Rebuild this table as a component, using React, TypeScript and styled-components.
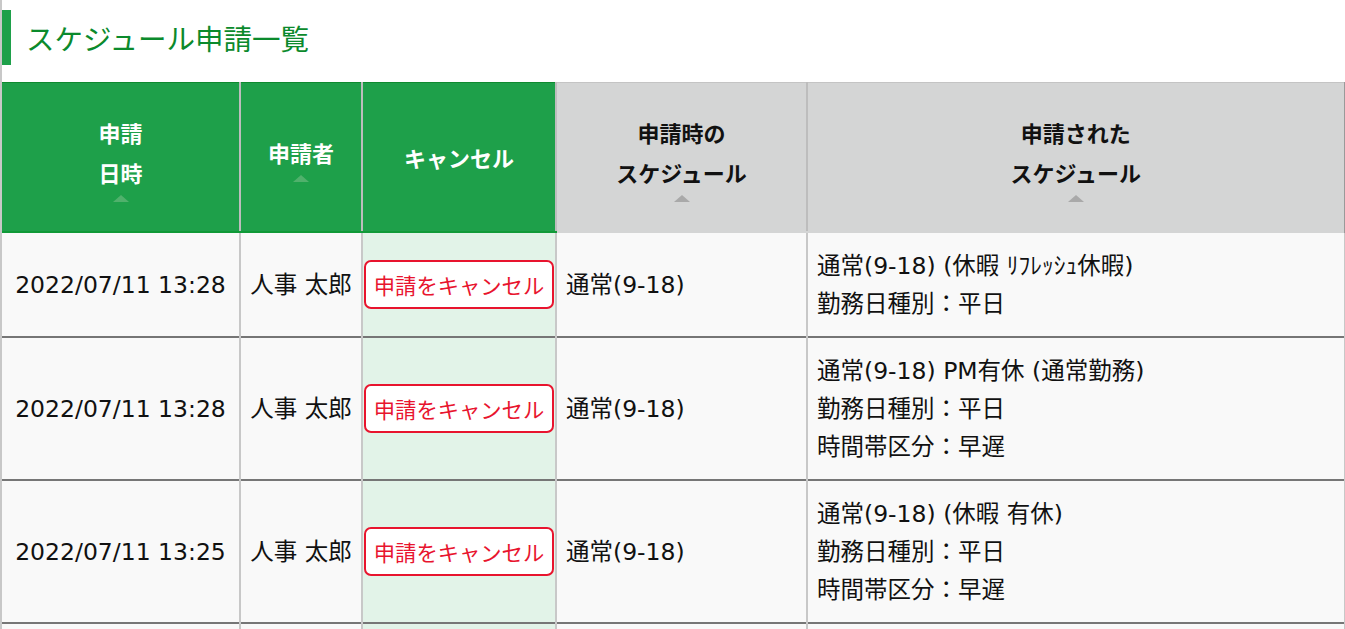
import React from "react";
import styled, { createGlobalStyle } from "styled-components";

const GlobalStyle = createGlobalStyle`
  html, body {
    margin: 0;
    padding: 0;
    background: #ffffff;
  }
  body {
    font-family: "DejaVu Sans", "Noto Sans CJK JP", sans-serif;
    color: #111;
  }
`;

const Page = styled.div`
  border-left: 2px solid #c8c8c8;
  height: 629px;
  box-sizing: border-box;
  overflow: hidden;
`;

const Title = styled.h1`
  margin: 10px 0 0;
  height: 55px;
  display: flex;
  align-items: center;
  border-left: 9px solid #1ea04a;
  padding-left: 15px;
  font-family: "Noto Sans CJK JP", sans-serif;
  font-size: 28.5px;
  font-weight: 400;
  color: #0b8a2c;
`;

const Table = styled.table`
  margin-top: 17px;
  width: 1343px;
  border-collapse: collapse;
  table-layout: fixed;
`;

const HeadCell = styled.th<{ $gray?: boolean; $w: number }>`
  width: ${(p) => p.$w}px;
  height: 149px;
  box-sizing: border-box;
  padding: 0 6px;
  background: ${(p) => (p.$gray ? "#d4d5d5" : "#1ea04a")};
  color: ${(p) => (p.$gray ? "#111" : "#fff")};
  border-top: 1px solid ${(p) => (p.$gray ? "#c4c4c4" : "#0f8a30")};
  border-bottom: 2px solid ${(p) => (p.$gray ? "#d4d5d5" : "#109a38")};
  border-left: 2px solid #bdbdbd;
  border-right: 2px solid #bdbdbd;
  font-family: "Noto Sans CJK JP", sans-serif;
  font-size: 22px;
  font-weight: 700;
  line-height: 40px;
  text-align: center;
  vertical-align: middle;
  &:first-child {
    border-left: none;
  }
  &:last-child {
    border-right: 3px solid #9a9a9a;
  }
`;

const SortArrow = styled.span<{ $gray?: boolean }>`
  display: block;
  width: 0;
  height: 0;
  margin: 3px auto 0;
  border-left: 8px solid transparent;
  border-right: 8px solid transparent;
  border-bottom: 7px solid ${(p) => (p.$gray ? "#a9a9a9" : "#50b16c")};
`;

const Row = styled.tr<{ $filler?: boolean }>`
  border-bottom: 2px solid #767676;
  height: ${(p) => (p.$filler ? "40px" : "auto")};
`;

const Cell = styled.td<{ $cancel?: boolean; $center?: boolean }>`
  box-sizing: border-box;
  padding: 14px 9px 13px;
  background: ${(p) => (p.$cancel ? "#e2f3e8" : "#f9f9f9")};
  border-left: 2px solid #c8c8c8;
  border-right: 2px solid #c8c8c8;
  font-size: 23.5px;
  line-height: 38px;
  vertical-align: middle;
  white-space: nowrap;
  text-align: ${(p) => (p.$center ? "center" : "left")};
  &:first-child {
    border-left: none;
  }
  &:last-child {
    border-right: 3px solid #c8c8c8;
  }
  ${(p) => (p.$cancel ? "padding: 0 1px;" : "")}
`;

const CancelButton = styled.button`
  display: block;
  width: 100%;
  height: 49px;
  box-sizing: border-box;
  background: #fff;
  border: 2px solid #e8142e;
  border-radius: 7px;
  color: #e8142e;
  font-family: "Noto Sans CJK JP", sans-serif;
  font-size: 21.3px;
  padding: 0 4px;
  white-space: nowrap;
  cursor: pointer;
`;

const Line = styled.div``;

type Req = {
  date: string;
  applicant: string;
  before: string;
  after: string[];
};

const requests: Req[] = [
  {
    date: "2022/07/11 13:28",
    applicant: "人事 太郎",
    before: "通常(9-18)",
    after: ["通常(9-18) (休暇 ﾘﾌﾚｯｼｭ休暇)", "勤務日種別：平日"],
  },
  {
    date: "2022/07/11 13:28",
    applicant: "人事 太郎",
    before: "通常(9-18)",
    after: ["通常(9-18) PM有休 (通常勤務)", "勤務日種別：平日", "時間帯区分：早遅"],
  },
  {
    date: "2022/07/11 13:25",
    applicant: "人事 太郎",
    before: "通常(9-18)",
    after: ["通常(9-18) (休暇 有休)", "勤務日種別：平日", "時間帯区分：早遅"],
  },
];

export default function App() {
  return (
    <>
      <GlobalStyle />
      <Page>
        <Title>スケジュール申請一覧</Title>
        <Table>
          <thead>
            <tr>
              <HeadCell $w={238}>
                申請
                <br />
                日時
                <SortArrow />
              </HeadCell>
              <HeadCell $w={122}>
                申請者
                <SortArrow />
              </HeadCell>
              <HeadCell $w={194}>キャンセル</HeadCell>
              <HeadCell $w={251} $gray>
                申請時の
                <br />
                スケジュール
                <SortArrow $gray />
              </HeadCell>
              <HeadCell $w={538} $gray>
                申請された
                <br />
                スケジュール
                <SortArrow $gray />
              </HeadCell>
            </tr>
          </thead>
          <tbody>
            {requests.map((r, i) => (
              <Row key={i}>
                <Cell $center>{r.date}</Cell>
                <Cell $center>{r.applicant}</Cell>
                <Cell $cancel>
                  <CancelButton>申請をキャンセル</CancelButton>
                </Cell>
                <Cell>{r.before}</Cell>
                <Cell>
                  {r.after.map((t, j) => (
                    <Line key={j}>{t}</Line>
                  ))}
                </Cell>
              </Row>
            ))}
            <Row $filler>
              <Cell />
              <Cell />
              <Cell $cancel />
              <Cell />
              <Cell />
            </Row>
          </tbody>
        </Table>
      </Page>
    </>
  );
}
